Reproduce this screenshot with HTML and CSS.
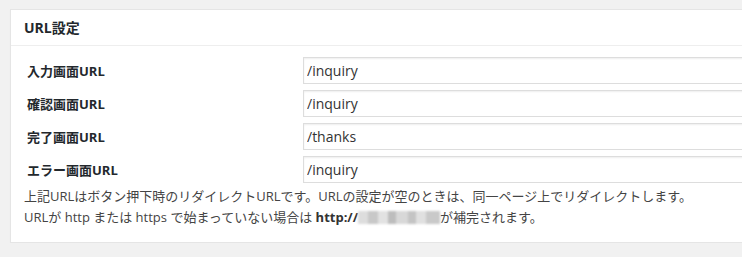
FILE: index.html
```html
<!DOCTYPE html>
<html lang="ja">
<head>
    <meta charset="UTF-8">
    <meta name="viewport" content="width=device-width, initial-scale=1.0">
    <title>URL設定</title>
    <link rel="stylesheet" href="styles.css">
</head>
<body>
    <div class="postbox">
        <h3 class="hndle">URL設定</h3>
        <div class="inside">
            <div class="url-table">
                <label class="url-label">入力画面URL</label>
                <input class="url-input" type="text" value="/inquiry">
                <label class="url-label">確認画面URL</label>
                <input class="url-input" type="text" value="/inquiry">
                <label class="url-label">完了画面URL</label>
                <input class="url-input" type="text" value="/thanks">
                <label class="url-label">エラー画面URL</label>
                <input class="url-input" type="text" value="/inquiry">
            </div>
            <p class="description">
                上記URLはボタン押下時のリダイレクトURLです。URLの設定が空のときは、同一ページ上でリダイレクトします。<br>
                URLが http または https で始まっていない場合は <strong>http://<span class="masked"></span></strong>が補完されます。
            </p>
        </div>
    </div>
</body>
</html>
```

FILE: styles.css
```css
body {
    margin: 0;
    padding: 9px 0 0 10px;
    background: #f1f1f1;
    font-family: "Open Sans", "Noto Sans CJK JP", sans-serif;
    color: #444;
    overflow: hidden;
}
.postbox {
    width: 760px;
    background: #fff;
    border: 1px solid #e5e5e5;
    box-shadow: 0 1px 1px rgba(0, 0, 0, .04);
}
.hndle {
    margin: 0;
    padding: 8px 13px;
    font-size: 14px;
    line-height: 19px;
    font-weight: 700;
    color: #23282d;
    border-bottom: 1px solid #eee;
}
.inside {
    padding: 11px 13px 15px;
}
.url-table {
    display: grid;
    grid-template-columns: 276px 1fr;
    row-gap: 6px;
    padding-left: 3px;
    align-items: center;
}
.url-label {
    font-size: 13px;
    font-weight: 700;
    color: #23282d;
}
.url-input {
    box-sizing: border-box;
    height: 27px;
    width: 100%;
    margin: 0;
    padding: 0 3px;
    border: 1px solid #ddd;
    box-shadow: inset 0 1px 2px rgba(0, 0, 0, .07);
    font-family: "Open Sans", sans-serif;
    font-size: 14px;
    color: #333;
    background: #fff;
}
.description {
    margin: 3px 0 0;
    font-size: 13px;
    line-height: 20.5px;
    color: #444;
}
.description strong {
    color: #333;
}
.masked {
    display: inline-block;
    width: 82px;
    height: 13px;
    vertical-align: -2px;
    background:
        linear-gradient(90deg, #ddd 0 10px, #c8c8c8 10px 20px, #e2e2e2 20px 30px, #bdbdbd 30px 38px, #d8d8d8 38px 50px, #c4c4c4 50px 58px, #e0e0e0 58px 68px, #c9c9c9 68px 82px);
    filter: blur(1px);
}
```
